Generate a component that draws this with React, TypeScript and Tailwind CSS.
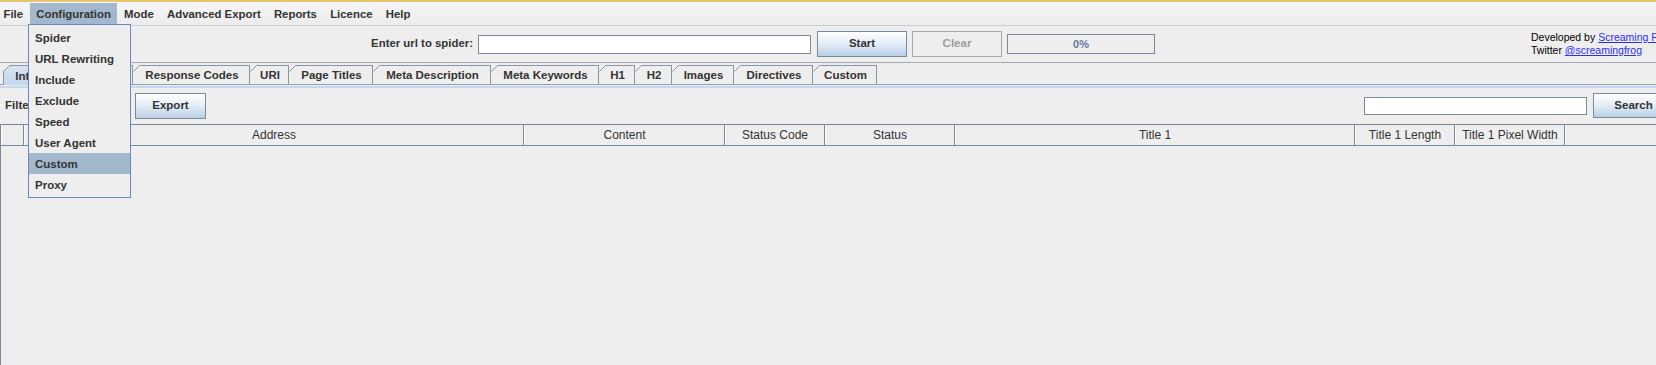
import React from "react";

const menuItems = ["File", "Configuration", "Mode", "Advanced Export", "Reports", "Licence", "Help"];
const dropItems = ["Spider", "URL Rewriting", "Include", "Exclude", "Speed", "User Agent", "Custom", "Proxy"];

const tabs: { label: string; w: string; sel?: boolean; first?: boolean }[] = [
  { label: "Internal", w: "w-[64px]", sel: true, first: true },
  { label: "External", w: "w-[66px]" },
  { label: "Response Codes", w: "w-[117px]" },
  { label: "URI", w: "w-[39px]" },
  { label: "Page Titles", w: "w-[84px]" },
  { label: "Meta Description", w: "w-[118px]" },
  { label: "Meta Keywords", w: "w-[108px]" },
  { label: "H1", w: "w-[36px]" },
  { label: "H2", w: "w-[37px]" },
  { label: "Images", w: "w-[62px]" },
  { label: "Directives", w: "w-[79px]" },
  { label: "Custom", w: "w-[64px]" },
];

const cols: { label: string; w: string }[] = [
  { label: "", w: "w-[23px]" },
  { label: "Address", w: "w-[500px]" },
  { label: "Content", w: "w-[201px]" },
  { label: "Status Code", w: "w-[100px]" },
  { label: "Status", w: "w-[130px]" },
  { label: "Title 1", w: "w-[400px]" },
  { label: "Title 1 Length", w: "w-[100px]" },
  { label: "Title 1 Pixel Width", w: "w-[110px]" },
  { label: "", w: "flex-1" },
];

function Tab({ t }: { t: (typeof tabs)[number] }) {
  return (
    <div
      className={`relative ${t.w} shrink-0 flex items-center justify-center border-t border-r border-[#8796a8] font-bold text-[11.5px] ${
        t.first ? "border-l" : ""
      } ${t.sel ? "h-[20px] -mb-px z-10 bg-linear-to-b from-[#d6e4f3] to-[#c3d6ec]" : "h-[19px] bg-[#eeeeee]"}`}
    >
      <svg
        className={`absolute top-[-1px] ${t.first ? "left-[-1px]" : "left-0"}`}
        width="7"
        height="7"
        viewBox="0 0 7 7"
      >
        <polygon points="0,0 7,0 0,7" fill="#eeeeee" />
        <line x1="0.5" y1="6.5" x2="6.5" y2="0.5" stroke="#8796a8" strokeWidth="1" />
      </svg>
      <span className="pl-[2px] pt-[2px] whitespace-nowrap">{t.label}</span>
    </div>
  );
}

export default function App() {
  return (
    <div className="relative w-[1656px] h-[365px] overflow-hidden bg-[#eeeeee] text-[#333333] font-['Liberation_Sans',Arial,sans-serif] flex flex-col">
      {/* top yellow line */}
      <div className="h-[2px] shrink-0 bg-[#e6c56d]" />

      {/* menu bar */}
      <div className="h-[24px] shrink-0 flex items-stretch border-b border-[#cccccc] bg-linear-to-b from-[#f6f6f6] to-[#ececec]">
        {menuItems.map((m, i) => (
          <div
            key={m}
            className={`my-[1px] pt-[2px] shrink-0 flex items-center font-bold text-[11.4px] whitespace-nowrap ${
              i === 0 ? "pl-[3.5px] pr-[6.5px]" : "px-[6.6px]"
            } ${m === "Configuration" ? "bg-[#a3b8cc]" : ""}`}
          >
            {m}
          </div>
        ))}
      </div>

      {/* toolbar */}
      <div className="h-[37px] shrink-0 flex items-center border-b border-[#a3acb6] pl-[369px] whitespace-nowrap">
        <div className="shrink-0 w-[104px] text-right font-bold text-[11.4px]">Enter url to spider:</div>
        <div className="shrink-0 ml-[5px] w-[333px] h-[19px] bg-white border border-[#7a8a99]" />
        <div className="shrink-0 ml-[6px] w-[90px] h-[26px] flex items-center justify-center border border-[#7a8a99] bg-linear-to-b from-[#ffffff] via-[#e3ecf6] to-[#b9cfe6] font-bold text-[11.5px]">
          Start
        </div>
        <div className="shrink-0 ml-[5px] w-[90px] h-[26px] flex items-center justify-center border border-[#a8a8a8] bg-[#eeeeee] font-bold text-[11.5px] text-[#9c9c9c]">
          Clear
        </div>
        <div className="shrink-0 ml-[5px] w-[148px] h-[20px] flex items-center justify-center border border-[#7a8a99] bg-[#eeeeee] font-bold text-[11px] text-[#6577a4]">
          0%
        </div>
        <div className="ml-[376px] shrink-0 flex flex-col text-[10.5px] leading-[13px] text-black">
          <div>
            Developed by <span className="text-[#2d2dff] underline">Screaming Frog</span>
          </div>
          <div>
            Twitter <span className="text-[#2d2dff] underline">@screamingfrog</span>
          </div>
        </div>
      </div>

      {/* tabs */}
      <div className="h-[22px] shrink-0 flex items-end pl-[3px] border-b border-[#8d9db4]">
        {tabs.map((t) => (
          <Tab key={t.label} t={t} />
        ))}
      </div>
      <div className="h-[3px] shrink-0 flex flex-col">
        <div className="h-px bg-[#eeeeee]" />
        <div className="h-[2px] bg-[#c6d7eb]" />
      </div>

      {/* filter row */}
      <div className="h-[35px] shrink-0 flex items-center pl-[5px]">
        <div className="shrink-0 w-[130px] font-bold text-[11.5px]">Filter:</div>
        <div className="shrink-0 w-[71px] h-[26px] flex items-center justify-center border border-[#7a8a99] bg-linear-to-b from-[#ffffff] via-[#e3ecf6] to-[#b9cfe6] font-bold text-[11.5px]">
          Export
        </div>
        <div className="ml-auto shrink-0 w-[223px] h-[18px] bg-white border border-[#7a8a99]" />
        <div className="ml-[6px] mr-[-18px] w-[81px] shrink-0 h-[25px] flex items-center justify-center border border-[#7a8a99] bg-linear-to-b from-[#ffffff] via-[#e3ecf6] to-[#b9cfe6] font-bold text-[11.5px]">
          Search
        </div>
      </div>

      {/* table */}
      <div className="mt-px flex-1 flex flex-col border-l border-[#7a8a99]">
        <div className="h-[22px] shrink-0 flex border-t border-b border-[#7a8a99]">
          {cols.map((c, i) => (
            <div
              key={i}
              className={`${c.w} shrink-0 flex items-center justify-center text-[12px] whitespace-nowrap border-l border-l-white ${
                i < cols.length - 1 ? "border-r border-r-[#7a8a99]" : ""
              }`}
            >
              {c.label}
            </div>
          ))}
        </div>
        <div className="flex-1" />
      </div>

      {/* dropdown menu */}
      <div className="absolute left-[28px] top-[24px] w-[103px] border border-[#6c89c6] bg-[#eeeeee] pt-[2px] pb-[2px] z-20">
        {dropItems.map((d) => (
          <div
            key={d}
            className={`h-[21px] pt-[2px] flex items-center pl-[6px] font-bold text-[11.5px] ${d === "Custom" ? "bg-[#a3b8cc]" : ""}`}
          >
            {d}
          </div>
        ))}
      </div>
    </div>
  );
}
